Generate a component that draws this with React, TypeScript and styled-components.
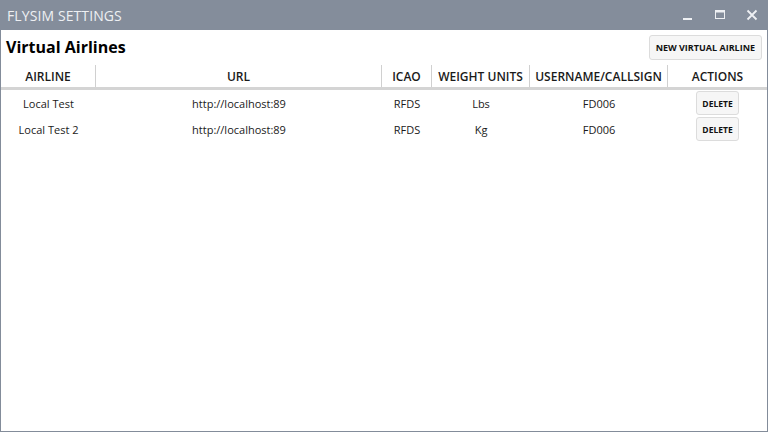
import React from "react";
import styled, { createGlobalStyle } from "styled-components";

const Global = createGlobalStyle`
  html, body { margin: 0; padding: 0; }
  body { font-family: "Open Sans", "Noto Sans", sans-serif; color: #1a1a1a; }
`;

const Window = styled.div`
  width: 768px;
  height: 432px;
  box-sizing: border-box;
  display: flex;
  flex-direction: column;
  border: 1px solid #838c9a;
  border-top: none;
  background: #fff;
`;

const TitleBar = styled.div`
  height: 30px;
  flex: none;
  background: #848d9b;
  display: flex;
  align-items: center;
  padding-left: 7px;
  margin: 0 -1px;
`;

const Title = styled.div`
  color: #eef0f3;
  font-size: 14px;
  letter-spacing: 0.1px;
  flex: 1;
`;

const WinButton = styled.div`
  width: 32px;
  height: 30px;
  display: flex;
  align-items: center;
  justify-content: center;
`;

const Header = styled.div`
  display: flex;
  align-items: center;
  justify-content: space-between;
  padding: 2px 5px 0 5px;
  height: 30px;
  flex: none;
`;

const Heading = styled.h1`
  margin: 0;
  font-size: 16px;
  font-weight: 700;
  color: #000;
`;

const Button = styled.button<{ $small?: boolean }>`
  font-family: "Open Sans", "Noto Sans", sans-serif;
  font-weight: 700;
  font-size: ${(p) => (p.$small ? "8.5px" : "9px")};
  color: #111;
  background: #f6f6f6;
  border: 1px solid #dcdcdc;
  border-radius: 3px;
  height: ${(p) => (p.$small ? "24px" : "25px")};
  padding: ${(p) => (p.$small ? "0 5px" : "0 6px")};
  cursor: pointer;
`;

const cols = "95px 286px 50px 98px 138px 1fr";

const HeadRow = styled.div`
  display: grid;
  grid-template-columns: ${cols};
  height: 22px;
  margin-top: 3px;
  border-bottom: 3px solid #d4d4d4;
  flex: none;
`;

const HeadCell = styled.div<{ $last?: boolean }>`
  display: flex;
  align-items: center;
  justify-content: center;
  font-size: 12px;
  font-weight: 600;
  color: #1a1a1a;
  border-right: ${(p) => (p.$last ? "none" : "1px solid #d0d0d0")};
`;

const Row = styled.div`
  display: grid;
  grid-template-columns: ${cols};
  height: 26px;
  flex: none;
`;

const Cell = styled.div`
  display: flex;
  align-items: center;
  justify-content: center;
  font-size: 11px;
  color: #1a1a1a;
`;

const rows = [
  { airline: "Local Test", url: "http://localhost:89", icao: "RFDS", unit: "Lbs", user: "FD006" },
  { airline: "Local Test 2", url: "http://localhost:89", icao: "RFDS", unit: "Kg", user: "FD006" },
];

export default function App() {
  return (
    <>
      <Global />
      <Window>
        <TitleBar>
          <Title>FLYSIM SETTINGS</Title>
          <WinButton>
            <svg width="12" height="12" viewBox="0 0 12 12">
              <rect x="1" y="9" width="9" height="2" fill="#eef0f3" />
            </svg>
          </WinButton>
          <WinButton>
            <svg width="12" height="12" viewBox="0 0 12 12">
              <rect x="1.5" y="1.5" width="9" height="8" fill="none" stroke="#eef0f3" strokeWidth="1" />
              <rect x="1.5" y="1.5" width="9" height="2" fill="#eef0f3" />
            </svg>
          </WinButton>
          <WinButton>
            <svg width="12" height="12" viewBox="0 0 12 12">
              <path d="M1.5 1.5 L10.5 10.5 M10.5 1.5 L1.5 10.5" stroke="#eef0f3" strokeWidth="1.8" />
            </svg>
          </WinButton>
        </TitleBar>
        <Header>
          <Heading>Virtual Airlines</Heading>
          <Button>NEW VIRTUAL AIRLINE</Button>
        </Header>
        <HeadRow>
          <HeadCell>AIRLINE</HeadCell>
          <HeadCell>URL</HeadCell>
          <HeadCell>ICAO</HeadCell>
          <HeadCell>WEIGHT UNITS</HeadCell>
          <HeadCell>USERNAME/CALLSIGN</HeadCell>
          <HeadCell $last>ACTIONS</HeadCell>
        </HeadRow>
        {rows.map((r, i) => (
          <Row key={i}>
            <Cell>{r.airline}</Cell>
            <Cell>{r.url}</Cell>
            <Cell>{r.icao}</Cell>
            <Cell>{r.unit}</Cell>
            <Cell>{r.user}</Cell>
            <Cell>
              <Button $small>DELETE</Button>
            </Cell>
          </Row>
        ))}
      </Window>
    </>
  );
}
